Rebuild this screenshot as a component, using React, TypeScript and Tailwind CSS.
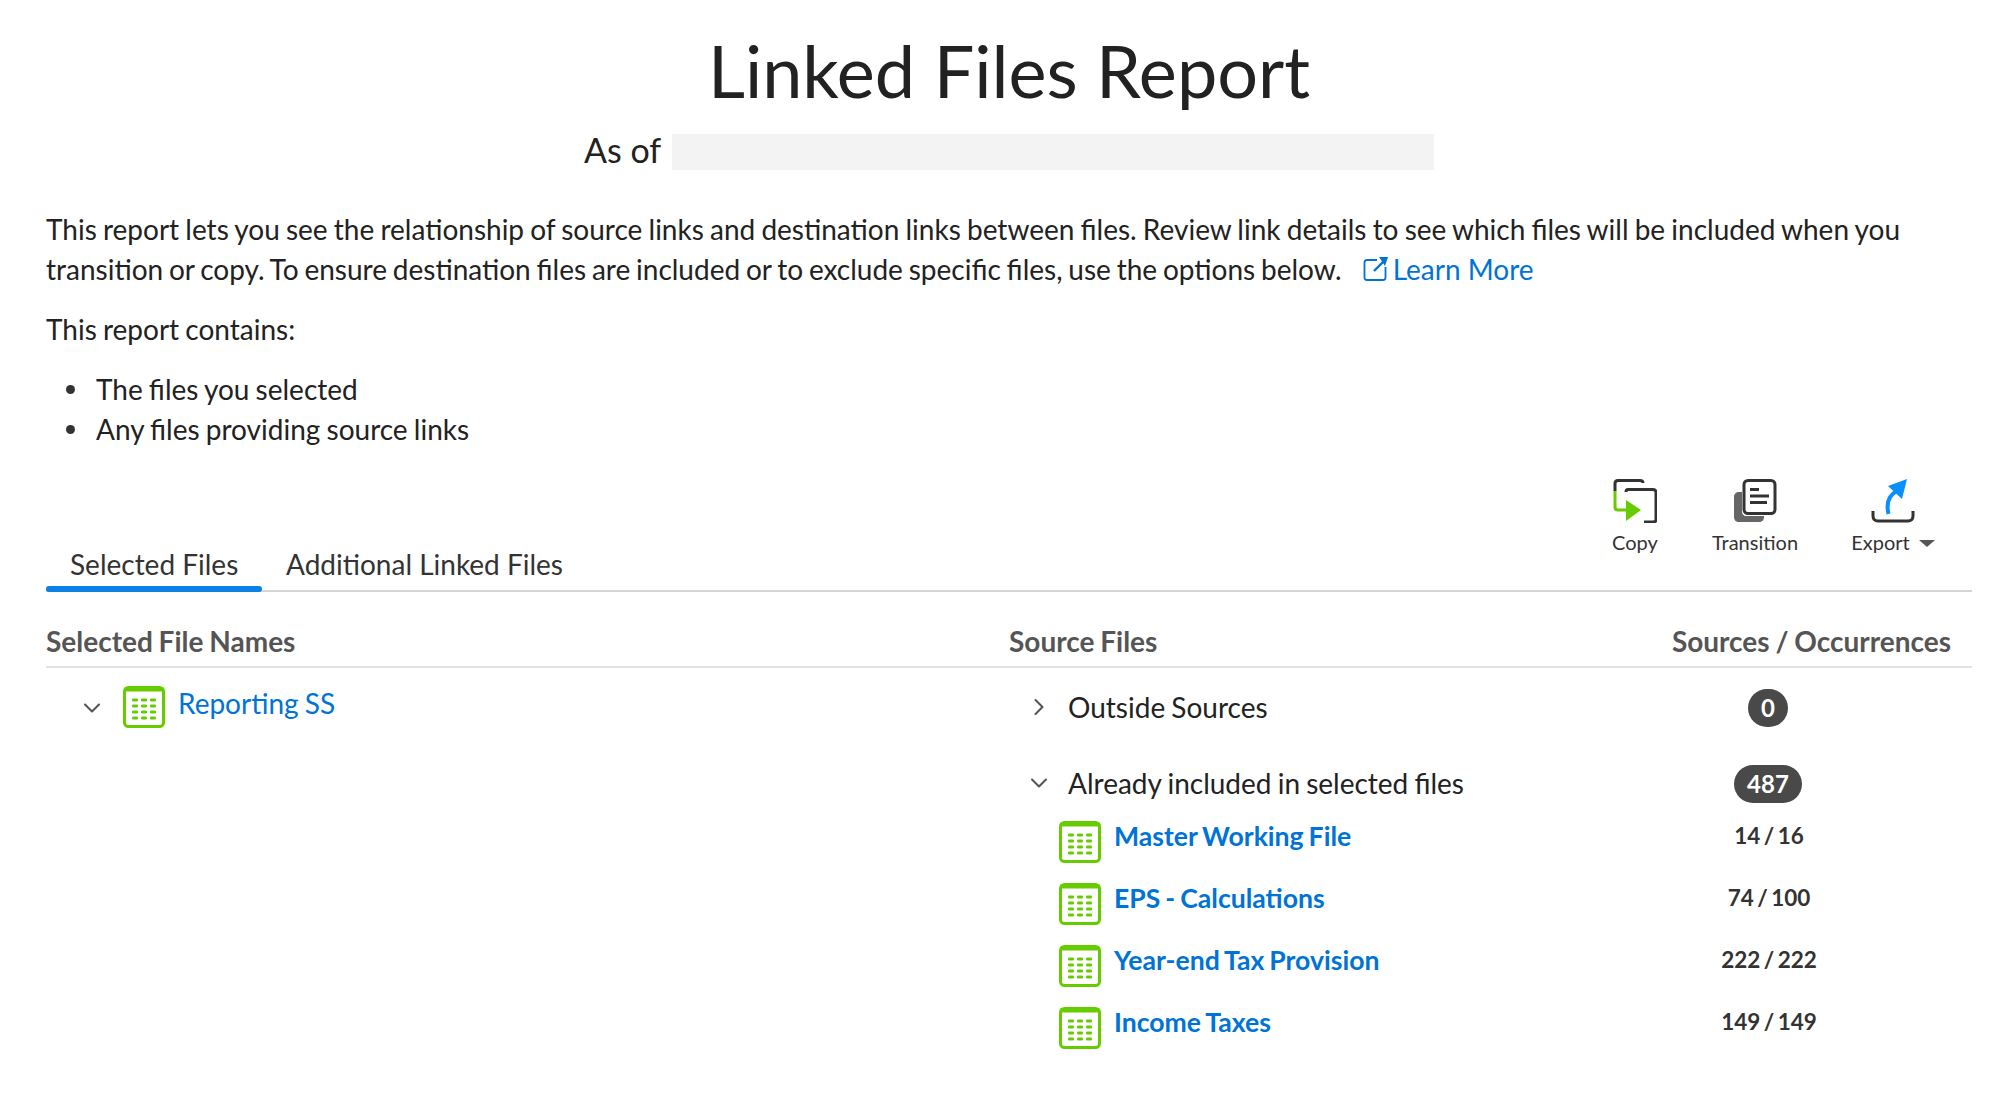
import { ChevronDown, ChevronRight } from "lucide-react";

const sourceFiles = [
  { name: "Master Working File", count: "14 / 16" },
  { name: "EPS - Calculations", count: "74 / 100" },
  { name: "Year-end Tax Provision", count: "222 / 222" },
  { name: "Income Taxes", count: "149 / 149" },
];

function SheetIcon({ className }: { className?: string }) {
  const dots = [];
  for (let row = 0; row < 4; row++) {
    for (let col = 0; col < 3; col++) {
      dots.push(<rect key={`${row}-${col}`} x={9 + col * 9} y={12.5 + row * 6} width="6" height="3" rx="1.2" fill="#66cc00" />);
    }
  }
  return (
    <svg viewBox="0 0 42 42" className={className}>
      <rect x="1.5" y="1.5" width="39" height="39" rx="4" fill="#fff" stroke="#66cc00" strokeWidth="3" />
      <rect x="1.5" y="1.5" width="39" height="4" fill="#66cc00" />
      {dots}
    </svg>
  );
}

function CopyIcon() {
  return (
    <svg viewBox="0 0 44 44" className="w-[44px] h-[44px]" fill="none">
      <path d="M2 12V4.5C2 2.5 3.5 1.5 5 1.5h22c2 0 3 1 3 2.5" stroke="#333" strokeWidth="3" />
      <path d="M13 13V13C13 11.5 14 10.5 15 10.5h25c2 0 3 1.5 3 3v27c0 1.5-1 2.5-3 2.5H31" stroke="#333" strokeWidth="3" />
      <path d="M2 12v16c0 2 1 3 3 3h9" stroke="#66cc00" strokeWidth="3" />
      <path d="M13 21l15 10-15 11z" fill="#66cc00" />
    </svg>
  );
}

function TransitionIcon() {
  return (
    <svg viewBox="0 0 44 44" className="w-[44px] h-[44px]" fill="none">
      <path d="M9 13H6c-3 0-5 2-5 5v20c0 3 2 5 5 5h20c3 0 5-2 5-5v-1H13c-2 0-4-2-4-4z" fill="#666" />
      <rect x="11" y="1.5" width="31" height="33" rx="4" fill="#fff" stroke="#333" strokeWidth="3" />
      <path d="M17 10.5h9M17 17h19M17 23.5h17" stroke="#333" strokeWidth="2.8" />
    </svg>
  );
}

function ExportIcon() {
  return (
    <svg viewBox="0 0 44 44" className="w-[44px] h-[44px]" fill="none">
      <path d="M2 32v5c0 3 2 5 5 5h30c3 0 5-2 5-5v-5" stroke="#333" strokeWidth="3" />
      <path d="M17.5 35C15 24 18 16 26 12" stroke="#0a8fff" strokeWidth="4" />
      <path d="M17 7l19-7-5 20z" fill="#0a8fff" />
    </svg>
  );
}

function ExternalIcon() {
  return (
    <svg viewBox="0 0 26 26" className="w-[26px] h-[26px]" fill="none">
      <path d="M14 4H4C2.5 4 1.5 5 1.5 6.5v15c0 1.5 1 2.5 2.5 2.5h16c1.5 0 2.5-1 2.5-2.5V11" stroke="#0073d6" strokeWidth="1.8" />
      <path d="M11 15l9-9" stroke="#0073d6" strokeWidth="2.4" />
      <path d="M16 1h9l-3 9z" fill="#0073d6" />
    </svg>
  );
}

export default function App() {
  return (
    <div className="h-[1102px] overflow-hidden bg-white pl-[46px] pr-[28px] text-[#222] font-['Lato','Noto_Sans',sans-serif]">
      <h1 className="text-center text-[72px] leading-[86px] pt-[27px] font-normal text-[#222]">Linked Files Report</h1>

      <div className="flex items-center h-[36px] mt-[21px] ml-[538px] text-[34px]">
        <span className="-mt-[5px]">As of</span>
        <div className="w-[762px] h-[36px] ml-[11px] bg-[#f3f3f3]" />
      </div>

      <div className="mt-[39px] text-[28px] leading-[40px] [word-spacing:-1px]">
        <p>This report lets you see the relationship of source links and destination links between files. Review link details to see which files will be included when you</p>
        <p className="flex items-center">
          <span className="[word-spacing:-1.35px]">transition or copy. To ensure destination files are included or to exclude specific files, use the options below.</span>
          <span className="flex items-center ml-[21px] text-[#0073d6] [word-spacing:0px]">
            <ExternalIcon />
            <span className="ml-[4px]">Learn More</span>
          </span>
        </p>
      </div>

      <p className="mt-[20px] text-[28px] leading-[40px] [word-spacing:-1px]">This report contains:</p>

      <ul className="mt-[20px] text-[28px] leading-[40px] [word-spacing:-1px]">
        {["The files you selected", "Any files providing source links"].map((item) => (
          <li key={item} className="flex items-center">
            <span className="w-[9px] h-[9px] ml-[20px] mr-[21px] rounded-full bg-[#333]" />
            {item}
          </li>
        ))}
      </ul>

      <div className="flex justify-between items-end h-[144px] border-b-2 border-[#d4d4d4] mt-[-1px]">
        <div className="flex text-[28px] leading-[40px] text-[#333]">
          <div className="flex flex-col w-[216px] -mb-[2px]">
            <span className="px-[24px] pb-[2px] whitespace-nowrap">Selected Files</span>
            <div className="h-[6px] rounded-full bg-[#0a7fe6]" />
          </div>
          <div className="px-[24px] pb-[6px]">Additional Linked Files</div>
        </div>
        <div className="flex text-[20px] leading-[24px] text-[#333] mb-[36px]">
          <div className="flex flex-col items-center w-[60px] mr-[45px]">
            <CopyIcon />
            <span className="mt-[7px]">Copy</span>
          </div>
          <div className="flex flex-col items-center w-[90px] mr-[48px]">
            <TransitionIcon />
            <span className="mt-[7px]">Transition</span>
          </div>
          <div className="flex flex-col items-center w-[90px] mr-[34px]">
            <ExportIcon />
            <span className="mt-[7px] flex items-center">
              Export
              <span className="ml-[9px] mt-[3px] w-0 h-0 border-l-[8px] border-r-[8px] border-t-[7px] border-l-transparent border-r-transparent border-t-[#555]" />
            </span>
          </div>
        </div>
      </div>

      <div className="flex items-center h-[76px] border-b-2 border-[#e2e2e2] text-[28px] font-bold text-[#555] pt-[24px] [word-spacing:-1px]">
        <div className="w-[963px]">Selected File Names</div>
        <div className="flex-1">Source Files</div>
        <div className="pr-[21px]">Sources / Occurrences</div>
      </div>

      <div className="flex">
        <div className="w-[963px] flex items-start pt-[18px]">
          <ChevronDown className="w-[28px] h-[28px] ml-[32px] mt-[8px] text-[#555]" strokeWidth={1.8} />
          <SheetIcon className="w-[42px] h-[42px] ml-[17px]" />
          <a className="ml-[13px] -mt-[1px] text-[28px] leading-[36px] text-[#0073d6] [word-spacing:-1px]">Reporting SS</a>
        </div>

        <div className="flex-1 text-[28px] [word-spacing:-1px]">
          <div className="flex items-center h-[38px] mt-[21px]">
            <ChevronRight className="w-[28px] h-[28px] ml-[16px] -mt-[2px] text-[#555]" strokeWidth={1.8} />
            <span className="ml-[15px] -mt-[2px]">Outside Sources</span>
            <div className="ml-auto mr-[184px] w-[40px] h-[38px] rounded-full bg-[#494949] text-white text-[24px] font-bold flex items-center justify-center">0</div>
          </div>
          <div className="flex items-center h-[38px] mt-[38px]">
            <ChevronDown className="w-[28px] h-[28px] ml-[16px] -mt-[2px] text-[#555]" strokeWidth={1.8} />
            <span className="ml-[15px] -mt-[2px]">Already included in selected files</span>
            <div className="ml-auto mr-[170px] w-[68px] h-[38px] rounded-full bg-[#494949] text-white text-[24px] font-bold flex items-center justify-center">487</div>
          </div>
          <div className="pt-[17px]">
            {sourceFiles.map((file) => (
              <div key={file.name} className="flex items-start h-[62px]">
                <SheetIcon className="w-[42px] h-[42px] ml-[50px] mt-[1px]" />
                <a className="ml-[13px] text-[26.6px] leading-[36px] font-bold text-[#0073d6] -mt-[2px] [word-spacing:-1.5px]">{file.name}</a>
                <div className="ml-auto w-[240px] mr-[83px] text-center text-[22.5px] leading-[36px] font-bold text-[#333] -mt-[2px] [word-spacing:-2px]">{file.count}</div>
              </div>
            ))}
          </div>
        </div>
      </div>
    </div>
  );
}
